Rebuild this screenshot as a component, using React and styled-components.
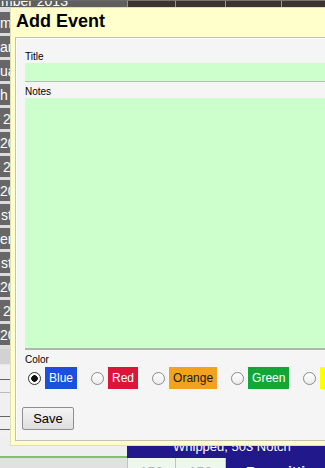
import React from "react";
import styled, { createGlobalStyle } from "styled-components";

const Global = createGlobalStyle`
  html, body { margin: 0; padding: 0; }
  body {
    font-family: "Liberation Sans", Arial, sans-serif;
    background: #fff;
    overflow: hidden;
  }
`;

const Page = styled.div`
  position: relative;
  width: 325px;
  height: 468px;
  overflow: hidden;
  display: flex;
  flex-direction: column;
  background: #fff;
`;

/* ---------- background page ---------- */
const HeaderBar = styled.div`
  display: flex;
  height: 7px;
  flex: none;
  overflow: hidden;
`;

const HeaderCell = styled.div`
  width: ${(p) => p.$w}px;
  flex: none;
  box-sizing: border-box;
  background: ${(p) => (p.$dark ? "#3b3430" : "#5f5f5f")};
  border-top: 1px solid ${(p) => (p.$dark ? "#7a746e" : "#6a6a6a")};
  border-left: 1px solid ${(p) => (p.$dark ? "#9a948c" : "transparent")};
  color: #fff;
  font-size: 14px;
  line-height: 16px;
  white-space: nowrap;
  overflow: hidden;
  & > span {
    display: block;
    margin-top: -8px;
  }
`;

const Body = styled.div`
  display: flex;
  height: 431px;
  flex: none;
`;

const SideColumn = styled.div`
  width: 12px;
  flex: none;
  display: flex;
  flex-direction: column;
  gap: 3px;
  padding-top: 5px;
  background: #dcdcdc;
  overflow: hidden;
`;

const SideCell = styled.div`
  height: 21px;
  flex: none;
  background: #676767;
  color: #fff;
  font-size: 14px;
  line-height: 22px;
  padding-left: ${(p) => p.$indent || 0}px;
  white-space: nowrap;
  overflow: hidden;
`;

const LowerRow = styled.div`
  height: ${(p) => p.$h}px;
  flex: none;
  background: ${(p) => p.$bg || "#f2f2f2"};
  border-bottom: 1px solid ${(p) => p.$line || "#777"};
  margin-top: -3px;
`;

const Footer = styled.div`
  display: flex;
  flex: 1;
`;

const FooterLeft = styled.div`
  width: 127px;
  flex: none;
  display: flex;
  flex-direction: column;
`;

const FooterLeftTop = styled.div`
  height: 18px;
  background: #efefef;
  border-bottom: 2px solid #7cc36a;
`;

const FooterLeftBottom = styled.div`
  flex: 1;
  background: #e1e1e1;
`;

const FooterRight = styled.div`
  flex: 1;
  display: flex;
  flex-direction: column;
`;

const NavyBar = styled.div`
  height: 20px;
  padding-left: 46px;
  background: #21188c;
  color: #fff;
  font-size: 13px;
  line-height: 17px;
  white-space: nowrap;
  overflow: hidden;
`;

const CellRow = styled.div`
  display: flex;
  flex: 1;
`;

const DataCell = styled.div`
  width: ${(p) => p.$w}px;
  flex: ${(p) => (p.$w ? "none" : 1)};
  box-sizing: border-box;
  background: ${(p) => (p.$navy ? "#21188c" : "#eef7ee")};
  border-left: 1px solid #b8c8b8;
  color: ${(p) => (p.$navy ? "#fff" : "#b0b0b0")};
  font-size: 14px;
  font-weight: ${(p) => (p.$navy ? 700 : 400)};
  line-height: 22px;
  padding-top: 3px;
  text-align: center;
  white-space: nowrap;
  overflow: hidden;
`;

/* ---------- dialog ---------- */
const Dialog = styled.div`
  position: absolute;
  top: 7px;
  left: 10px;
  width: 430px;
  height: 439px;
  box-sizing: border-box;
  background: #ffffcc;
  border: 1px solid #e2dfb4;
  padding: 3px 0 4px 4px;
  display: flex;
  flex-direction: column;
`;

const DialogTitle = styled.h1`
  margin: 0 0 5px 1px;
  font-size: 18px;
  line-height: 21px;
  font-weight: 700;
  color: #000;
  flex: none;
`;

const Panel = styled.div`
  flex: 1;
  min-height: 0;
  background: #f5f5f5;
  border: 1px solid #c4c0b2;
  box-shadow: inset 1px 1px 0 #ffffff;
  padding: 13px 0 0 9px;
  display: flex;
  flex-direction: column;
`;

const FieldLabel = styled.label`
  display: block;
  font-size: 10px;
  line-height: 12px;
  color: #000;
  margin-top: ${(p) => p.$top || 0}px;
  flex: none;
`;

const TextInput = styled.input`
  display: block;
  flex: none;
  box-sizing: content-box;
  height: 18px;
  padding: 0;
  margin: 0;
  border: none;
  border-bottom: 1px solid #b4bcb0;
  background: #ccffcc;
  outline: none;
  font: inherit;
`;

const NotesArea = styled.textarea`
  display: block;
  flex: none;
  box-sizing: content-box;
  height: 250px;
  padding: 0;
  margin: 0;
  border: none;
  border-bottom: 2px solid #b0b6ac;
  background: #ccffcc;
  outline: none;
  resize: none;
  font: inherit;
`;

const ColorRow = styled.div`
  display: flex;
  align-items: center;
  flex: none;
  height: 22px;
  margin-top: 1px;
  white-space: nowrap;
`;

const ColorOption = styled.label`
  display: flex;
  align-items: center;
  margin-right: 11px;
  flex: none;
`;

const Radio = styled.input.attrs({ type: "radio" })`
  appearance: none;
  -webkit-appearance: none;
  width: 13px;
  height: 13px;
  margin: 0 4px 0 3px;
  box-sizing: border-box;
  border-radius: 50%;
  border: 1px solid ${(p) => (p.checked ? "#333" : "#8a8a8a")};
  background: ${(p) =>
    p.checked
      ? "radial-gradient(circle, #111 0 3px, #fff 3.6px)"
      : "linear-gradient(#ffffff, #ececec)"};
  flex: none;
`;

const Swatch = styled.span`
  display: block;
  height: 22px;
  padding: 0 4px;
  line-height: 22px;
  font-size: 12px;
  background: ${(p) => p.$bg};
  color: ${(p) => p.$fg};
`;

const SaveButton = styled.button`
  align-self: flex-start;
  flex: none;
  margin: 18px 0 0 -3px;
  width: 52px;
  height: 23px;
  padding: 0;
  border: 1px solid #8e8e8e;
  border-radius: 2px;
  background: linear-gradient(#f4f4f4, #dedede);
  font-family: "Liberation Sans", Arial, sans-serif;
  font-size: 13px;
  color: #000;
`;

const sideCells = [
  ["m", 0],
  ["ar", 0],
  ["ua", 0],
  ["h", 0],
  ["2", 3],
  ["20", 0],
  ["2", 3],
  ["20", 0],
  ["st", 1],
  ["er", 0],
  ["st", 1],
  ["20", 0],
  ["2", 3],
  ["20", 0],
];

const lowerRows = [
  { h: 15, bg: "#d2d2d2", line: "#e8e8e8" },
  { h: 14, bg: "#f0f0f0", line: "#666" },
  { h: 12, bg: "#f0f0f0", line: "#bbb" },
  { h: 23, bg: "#f0f0f0", line: "#666" },
  { h: 12, bg: "#f0f0f0", line: "#666" },
  { h: 14, bg: "#f0f0f0", line: "#666" },
];

const colors = [
  { name: "Blue", bg: "#1b4fdc", fg: "#fff", checked: true },
  { name: "Red", bg: "#dc1438", fg: "#fff" },
  { name: "Orange", bg: "#f2a21e", fg: "#1a1a1a" },
  { name: "Green", bg: "#12a636", fg: "#fff" },
  { name: "Yellow", bg: "#ffff00", fg: "#1a1a1a" },
];

export default function App() {
  return (
    <>
      <Global />
      <Page>
        <HeaderBar>
          <HeaderCell $w={127}>
            <span>mber 2013</span>
          </HeaderCell>
          <HeaderCell $w={48} $dark />
          <HeaderCell $w={50} $dark />
          <HeaderCell $w={56} $dark />
          <HeaderCell $w={44} $dark />
        </HeaderBar>
        <Body>
          <SideColumn>
            {sideCells.map(([t, i], k) => (
              <SideCell key={k} $indent={i}>
                {t}
              </SideCell>
            ))}
            <LowerRow $h={3} $bg="#dcdcdc" $line="#dcdcdc" />
            {lowerRows.map((r, k) => (
              <LowerRow key={k} $h={r.h} $bg={r.bg} $line={r.line} />
            ))}
          </SideColumn>
        </Body>
        <Footer>
          <FooterLeft>
            <FooterLeftTop />
            <FooterLeftBottom />
          </FooterLeft>
          <FooterRight>
            <NavyBar>Whipped, 503 Notch</NavyBar>
            <CellRow>
              <DataCell $w={48}>150</DataCell>
              <DataCell $w={50}>150</DataCell>
              <DataCell $navy>Ravenitti</DataCell>
            </CellRow>
          </FooterRight>
        </Footer>

        <Dialog>
          <DialogTitle>Add Event</DialogTitle>
          <Panel>
            <FieldLabel>Title</FieldLabel>
            <TextInput type="text" />
            <FieldLabel $top={4}>Notes</FieldLabel>
            <NotesArea />
            <FieldLabel $top={4}>Color</FieldLabel>
            <ColorRow>
              {colors.map((c) => (
                <ColorOption key={c.name}>
                  <Radio name="color" checked={!!c.checked} readOnly />
                  <Swatch $bg={c.bg} $fg={c.fg}>
                    {c.name}
                  </Swatch>
                </ColorOption>
              ))}
            </ColorRow>
            <SaveButton>Save</SaveButton>
          </Panel>
        </Dialog>
      </Page>
    </>
  );
}
